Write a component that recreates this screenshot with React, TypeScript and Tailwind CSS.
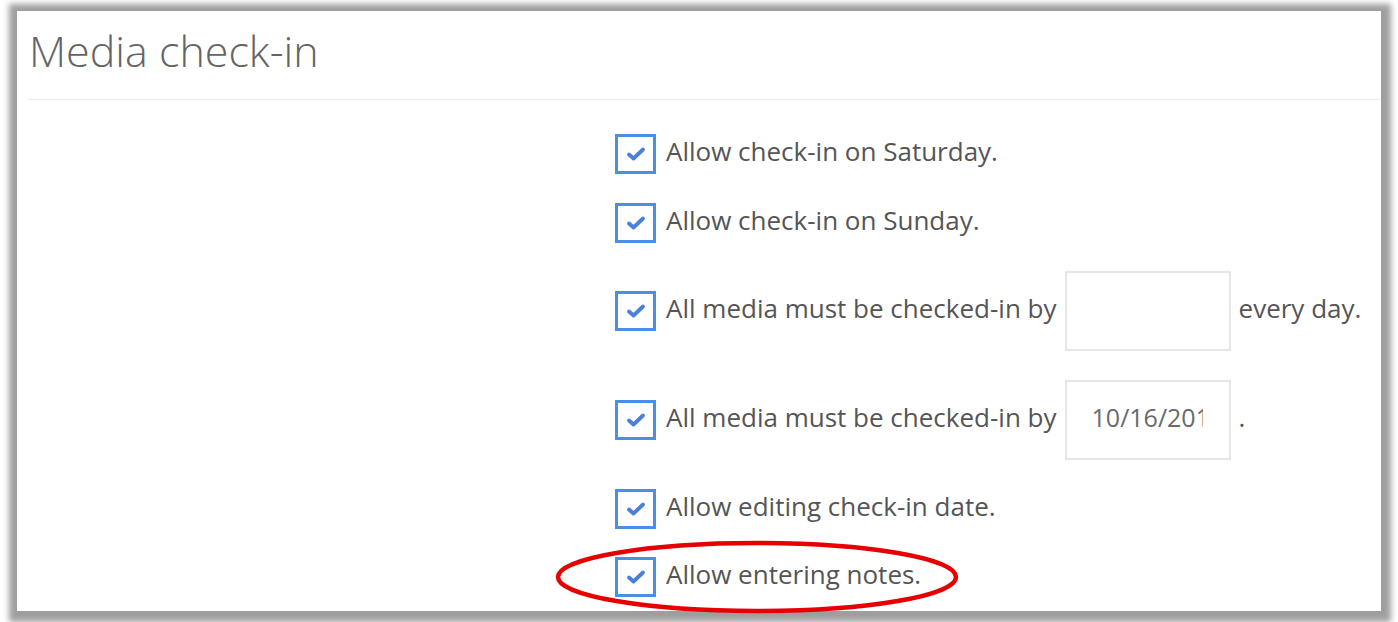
import React from "react";

function Check() {
  return (
    <span className="flex h-[40px] w-[41px] shrink-0 items-center justify-center border-[3px] border-[#4a8fe6] bg-white">
      <svg width="20" height="16" viewBox="0 0 20 16" fill="none">
        <path d="M3 8.5 L7.5 12.5 L17 3.5" stroke="#4a7fdc" strokeWidth="3.8" strokeLinecap="round" strokeLinejoin="round" />
      </svg>
    </span>
  );
}

function Row({ children, tall }: { children: React.ReactNode; tall?: boolean }) {
  return (
    <div className={`flex items-center ${tall ? "h-[80px]" : "h-[40px]"}`}>
      <Check />
      <div className="ml-[10px] flex items-center gap-[8px]">{children}</div>
    </div>
  );
}

function Label({ children }: { children: React.ReactNode }) {
  return <span className="pb-[6px] leading-[40px]">{children}</span>;
}

export default function App() {
  return (
    <div
      className="h-[622px] w-[1398px] overflow-hidden bg-white pl-[17px] pt-[11px]"
      style={{ fontFamily: '"Open Sans", sans-serif' }}
    >
      <div className="relative h-[600px] w-[1364px] bg-white shadow-[1px_2px_6px_9px_rgba(0,0,0,0.38)]">
        <h1 className="pl-[12px] pt-[9px] text-[43px] font-light leading-[62px] text-[#646464]">Media check-in</h1>
        <div className="ml-[11px] mt-[17px] h-[1px] bg-[#ececec]" />
        <div className="flex flex-col gap-[28.7px] pl-[598px] pt-[34px] text-[26px] text-[#555555]">
          <Row>
            <Label>Allow check-in on Saturday.</Label>
          </Row>
          <Row>
            <Label>Allow check-in on Sunday.</Label>
          </Row>
          <Row tall>
            <Label>All media must be checked-in by</Label>
            <span className="h-[80px] w-[166px] border-2 border-[#e6e6e6]" />
            <Label>every day.</Label>
          </Row>
          <Row tall>
            <Label>All media must be checked-in by</Label>
            <span className="flex h-[80px] w-[166px] items-center border-2 border-[#e6e6e6] pl-[25px] text-[25px] text-[#6a6a6a]">
              <span className="w-[111px] overflow-hidden whitespace-nowrap pb-[4px]">10/16/2019</span>
            </span>
            <Label>.</Label>
          </Row>
          <Row>
            <Label>Allow editing check-in date.</Label>
          </Row>
          <Row>
            <Label>Allow entering notes.</Label>
          </Row>
        </div>
        <svg className="absolute left-[538px] top-[528px]" width="406" height="78" viewBox="0 0 406 78">
          <ellipse cx="202" cy="38" rx="199" ry="34" fill="none" stroke="#e60000" strokeWidth="4.5" />
        </svg>
      </div>
    </div>
  );
}
